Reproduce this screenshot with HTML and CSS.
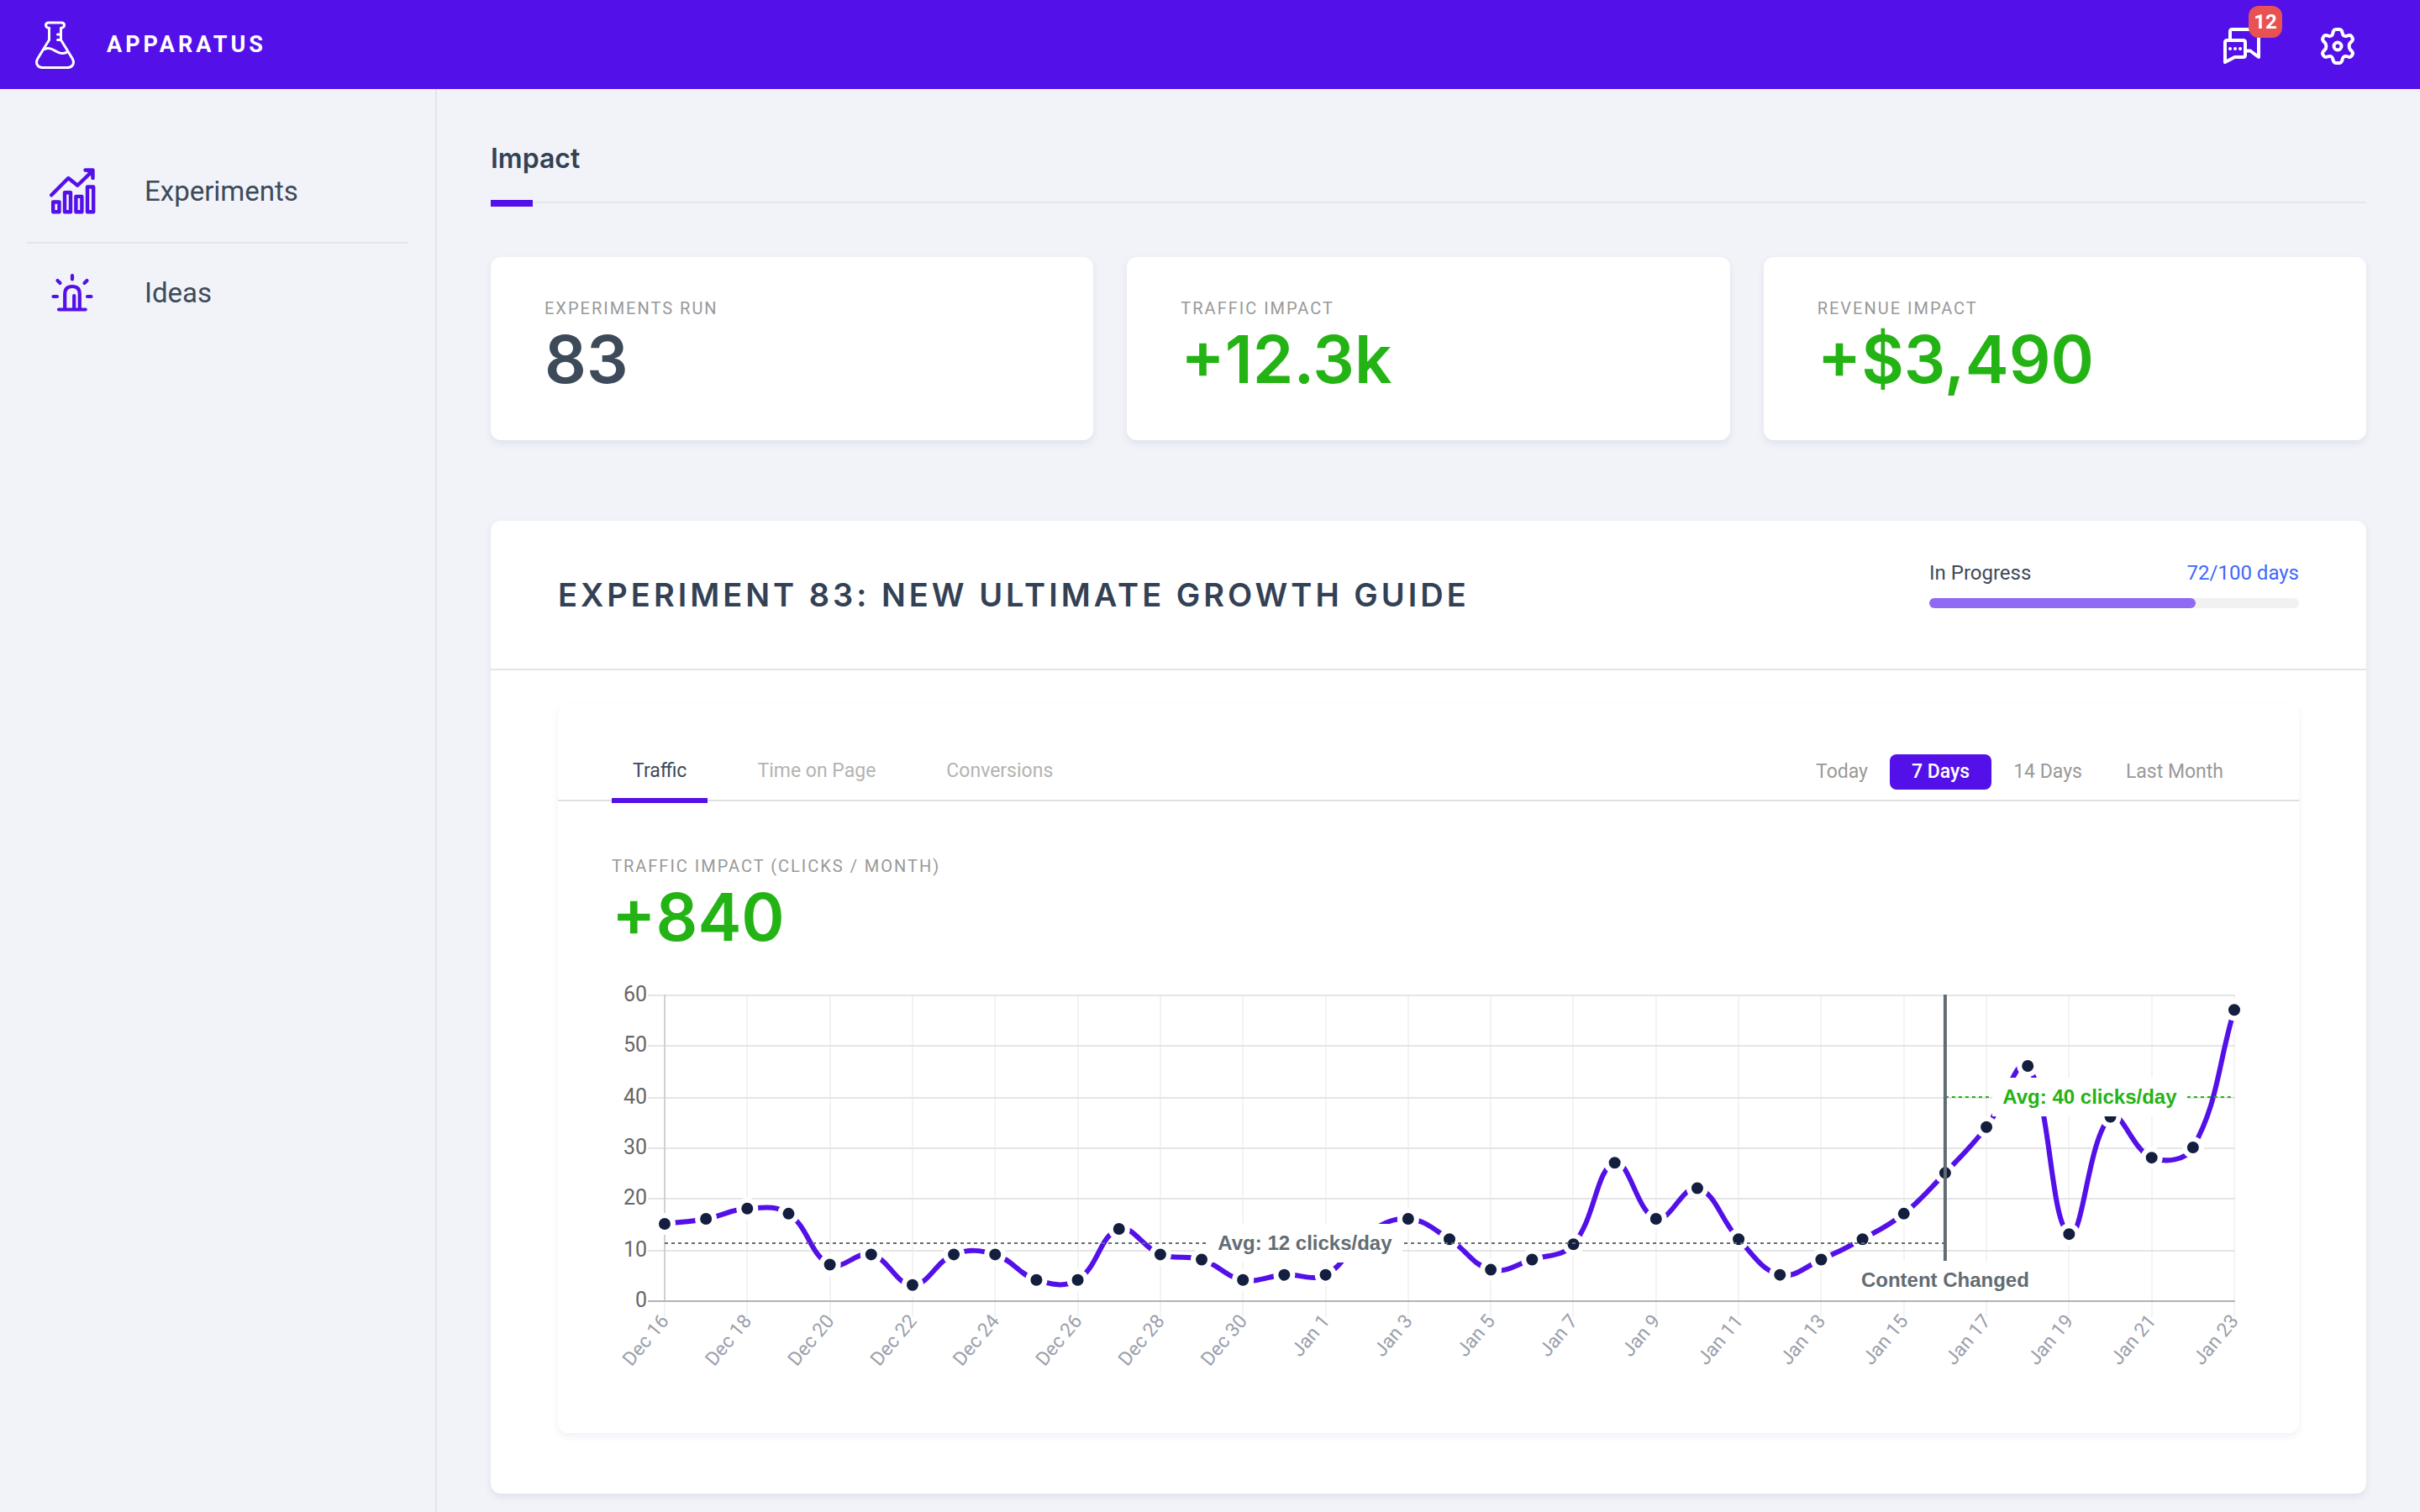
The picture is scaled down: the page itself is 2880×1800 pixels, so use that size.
FILE: index.html
```html
<!DOCTYPE html>
<html lang="en">
<head>
<meta charset="utf-8">
<meta name="viewport" content="width=device-width, initial-scale=1">
<title>Apparatus</title>
<link rel="stylesheet" href="styles.css">
</head>
<body>
<header class="topbar">
  <a class="brand" href="#">
    <svg class="brand-icon" viewBox="0 0 48 58" fill="none" stroke="#fff" stroke-width="3" stroke-linecap="round" stroke-linejoin="round" aria-hidden="true">
      <path d="M16.500 9.500C13.500 9 12.500 7.500 12.500 6Q12.500 3 16 3H31Q34.500 3 34.500 6C34.500 7.500 33.500 9 30.500 9.500"/>
      <path d="M16.500 9.500V23.500L3 45.500C-.5 51.500 3 56.500 8.500 56.500H38.500C44 56.500 47.500 51.500 44 45.500L30.500 23.500V9.500"/>
      <path d="M11 34.500C22 30 25 43 37 38.500M26.500 17H30.500M26.500 23.500H30.500"/>
    </svg>
    <span class="brand-name">APPARATUS</span>
  </a>
  <div class="actions">
    <button class="icon-button" type="button" aria-label="Messages, 12 unread">
      <svg class="icon-chat" viewBox="0 0 44 44" fill="none" stroke="#fff" stroke-width="4" stroke-linejoin="round" stroke-linecap="round" aria-hidden="true">
        <path d="M8 14V4.500Q8 2 10.500 2H39.500Q42 2 42 4.500V35L32 27.500H27"/>
        <path d="M4.500 15H23.500Q26 15 26 17.500V32.500Q26 35 23.500 35H13.500L2 41V17.500Q2 15 4.500 15Z"/>
        <g fill="#fff" stroke="none"><circle cx="8" cy="25" r="2"/><circle cx="14" cy="25" r="2"/><circle cx="20" cy="25" r="2"/></g>
      </svg>
      <span class="badge">12</span>
    </button>
    <button class="icon-button" type="button" aria-label="Settings">
      <svg class="icon-gear" viewBox="0 0 40 44" fill="none" stroke="#fff" stroke-width="4" stroke-linejoin="round" aria-hidden="true">
        <path d="M17.800 2H22.200C24.500 2 25.300 4 25.800 6.800C26.300 9.500 28.300 10.700 30.800 9.800C33.500 8.800 35.500 8.500 36.700 10.500L37.600 12.200C38.800 14.200 37.600 15.700 35.500 17.400C33 19.500 33 24.500 35.500 26.600C37.600 28.300 38.800 29.800 37.600 31.800L36.700 33.500C35.500 35.500 33.500 35.200 30.800 34.200C28.300 33.300 26.300 34.500 25.800 37.200C25.300 40 24.500 42 22.200 42H17.800C15.500 42 14.700 40 14.200 37.200C13.700 34.500 11.700 33.300 9.200 34.200C6.500 35.200 4.500 35.500 3.300 33.500L2.400 31.800C1.200 29.800 2.400 28.300 4.500 26.600C7 24.500 7 19.500 4.500 17.400C2.400 15.700 1.200 14.200 2.400 12.200L3.300 10.500C4.500 8.500 6.500 8.800 9.200 9.800C11.700 10.700 13.700 9.500 14.200 6.800C14.700 4 15.500 2 17.800 2Z"/>
        <circle cx="20" cy="22" r="4.500"/>
      </svg>
    </button>
  </div>
</header>
<div class="layout">
  <nav class="sidebar" aria-label="Main">
    <a class="nav-item" href="#">
      <svg class="nav-icon" viewBox="0 0 56 56" fill="none" stroke="#5310e8" stroke-width="4.400" stroke-linejoin="round" stroke-linecap="round" aria-hidden="true">
        <path d="M2.200 32.300L22.300 12L33.300 20.800L50 4.500M42.500 2.500H51.500V12"/>
        <path d="M44 2.500H51.500V10.500Z" fill="#5310e8" stroke-width="2"/>
        <path d="M4.200 40.500H11.500V52.200H4.200ZM18 29.300H25V52.200H18ZM31.400 33.900H38.400V52.200H31.400ZM45 22.500H52.200V52.200H45Z"/>
      </svg>
      <span>Experiments</span>
    </a>
    <a class="nav-item" href="#">
      <svg class="nav-icon" viewBox="0 0 56 56" fill="none" stroke="#5310e8" stroke-width="4.200" stroke-linejoin="round" stroke-linecap="round" aria-hidden="true">
        <path d="M11 47.500H42.700M18.200 47V29Q18.200 20 27 20Q35.800 20 35.800 29V47M29.200 31V47"/>
        <path d="M27 7V11.500M9.500 13L12.500 16M44.500 13L41.500 16M4.500 32H9M45 32H49.500"/>
      </svg>
      <span>Ideas</span>
    </a>
  </nav>
  <main class="content">
    <h1 class="page-title">Impact</h1>
    <section class="stats" aria-label="Totals">
      <div class="card stat-card">
        <p class="stat-label">EXPERIMENTS RUN</p>
        <p class="stat-value">83</p>
      </div>
      <div class="card stat-card">
        <p class="stat-label">TRAFFIC IMPACT</p>
        <p class="stat-value gain">+12.3k</p>
      </div>
      <div class="card stat-card">
        <p class="stat-label">REVENUE IMPACT</p>
        <p class="stat-value gain">+$3,490</p>
      </div>
    </section>
    <section class="card panel">
      <div class="panel-head">
        <h2 class="panel-title">EXPERIMENT 83: NEW ULTIMATE GROWTH GUIDE</h2>
        <div class="progress">
          <div class="progress-text"><span>In Progress</span><a href="#">72/100 days</a></div>
          <div class="progress-track"><div class="progress-fill" style="width: 72%"></div></div>
        </div>
      </div>
      <div class="report">
        <div class="report-bar">
          <div class="tabs" role="tablist">
            <button class="tab active" type="button" role="tab" aria-selected="true">Traffic</button>
            <button class="tab" type="button" role="tab">Time on Page</button>
            <button class="tab" type="button" role="tab">Conversions</button>
          </div>
          <div class="ranges">
            <button class="range" type="button">Today</button>
            <button class="range active" type="button">7 Days</button>
            <button class="range" type="button">14 Days</button>
            <button class="range" type="button">Last Month</button>
          </div>
        </div>
        <div class="report-body">
          <p class="stat-label">TRAFFIC IMPACT (CLICKS / MONTH)</p>
          <p class="stat-value gain">+840</p>
          <svg class="chart" id="chart" role="img" aria-label="Clicks per day, Dec 16 to Jan 23"></svg>
        </div>
      </div>
    </section>
  </main>
</div>
<script src="chart.js"></script>
</body>
</html>
```
FILE: styles.css
```css
* { box-sizing: border-box; }

body {
  margin: 0;
  min-height: 100vh;
  display: flex;
  flex-direction: column;
  background: #f2f3f8;
  color: #3d4a5a;
  font-family: Roboto, "Liberation Sans", sans-serif;
  font-size: 24px;
  line-height: 28px;
}

h1, h2, p { margin: 0; }
a { color: inherit; text-decoration: none; }
button {
  border: 0;
  background: none;
  font: inherit;
  color: inherit;
  cursor: pointer;
}

.topbar {
  display: flex;
  align-items: center;
  justify-content: space-between;
  height: 106px;
  padding: 0 78px 0 42px;
  background: #5310e8;
  color: #fff;
}
.brand { display: flex; align-items: center; gap: 37px; }
.brand-icon { width: 48px; height: 58px; }
.brand-name { font-size: 27px; font-weight: 700; letter-spacing: 4px; }
.actions { display: flex; align-items: center; gap: 72px; padding-top: 4px; }
.icon-button { position: relative; display: block; padding: 0; }
.icon-button svg { display: block; }
.icon-chat { width: 44px; height: 44px; }
.icon-gear { width: 40px; height: 44px; }
.badge {
  position: absolute;
  left: 30px;
  top: -26px;
  width: 40px;
  height: 38px;
  border-radius: 12px;
  background: #e85252;
  font-weight: 700;
  line-height: 38px;
  text-align: center;
}

.layout { display: flex; flex: 1; }
.sidebar {
  flex: none;
  width: 520px;
  padding: 62px 32px 0;
  border-right: 2px solid #e5e6eb;
}
.nav-item {
  display: flex;
  align-items: center;
  gap: 57px;
  height: 120px;
  padding-left: 27px;
  font-size: 33px;
}
.nav-item + .nav-item { border-top: 2px solid #e5e6eb; }
.nav-icon { width: 56px; height: 56px; }

.content { flex: 1; min-width: 0; padding: 63px 64px 20px; }
.page-title {
  position: relative;
  margin-bottom: 64px;
  padding-bottom: 31px;
  border-bottom: 2px solid #e5e6eb;
  color: #334155;
  font-family: Inter, Roboto, sans-serif;
  font-size: 32px;
  font-weight: 600;
  line-height: 40px;
}
.page-title::after {
  content: "";
  position: absolute;
  left: 0;
  bottom: -6px;
  width: 50px;
  height: 8px;
  background: #5310e8;
}

.card {
  border-radius: 12px;
  background: #fff;
  box-shadow: 0 4px 8px rgba(60, 80, 150, 0.1);
}
.stats {
  display: grid;
  grid-template-columns: repeat(3, 1fr);
  gap: 40px;
  margin-bottom: 96px;
}
.stat-card { padding: 49px 64px; }
.stat-label {
  margin-bottom: 2px;
  color: #999;
  font-size: 20px;
  line-height: 24px;
  letter-spacing: 2px;
}
.stat-value {
  font-family: Inter, Roboto, sans-serif;
  font-size: 78px;
  font-weight: 600;
  line-height: 94px;
}
.gain { color: #24b314; }

.panel { padding-bottom: 72px; }
.panel-head {
  display: flex;
  justify-content: space-between;
  padding: 48px 80px;
  border-bottom: 2px solid #e5e5e5;
}
.panel-title {
  color: #334155;
  font-family: Inter, Roboto, sans-serif;
  font-size: 38px;
  font-weight: 600;
  line-height: 80px;
  letter-spacing: 4px;
}
.progress { width: 440px; }
.progress-text { display: flex; justify-content: space-between; margin-bottom: 16px; }
.progress-text a { color: #3e68fb; }
.progress-track { height: 12px; border-radius: 6px; background: #f1f1f1; }
.progress-fill { height: 100%; border-radius: 6px; background: #916af3; }

.report {
  margin: 40px 80px 0;
  border-radius: 12px;
  box-shadow: 0 4px 8px rgba(60, 60, 150, 0.07);
}
.report-bar {
  display: flex;
  align-items: flex-end;
  justify-content: space-between;
  padding: 60px 64px 0;
  border-bottom: 2px solid #dde1e6;
  font-size: 23px;
}
.tabs { display: flex; gap: 34px; margin-bottom: -4px; }
.tab {
  padding: 0 25px 18px;
  border-bottom: 6px solid transparent;
  color: #b3b3b3;
}
.tab.active { border-color: #5310e8; color: #3d4a5a; }
.ranges { display: flex; margin-bottom: 12px; }
.range { padding: 7px 26px; border-radius: 8px; color: #999; }
.range.active { background: #5310e8; color: #fff; font-weight: 500; }
.report-body { padding: 65px 64px 64px; }

.chart { display: block; width: 100%; height: 482px; margin-top: 21px; }
.chart text { font-size: 24px; }
.chart .tick-y { fill: #666; font-size: 25px; text-anchor: end; }
.chart .tick-x { fill: #9a9fab; font-size: 23px; text-anchor: end; }
.note {
  font-family: "Liberation Sans", Arial, sans-serif;
  font-weight: 700;
  text-anchor: middle;
}
```
FILE: chart.js
```js
// Draws the clicks-per-day line chart at the width of its container.
const clicks = [
  15, 16, 18, 17, 7, 9, 3, 9, 9, 4, 4, 14, 9, 8, 4, 5, 5, 13, 16, 12,
  6, 8, 11, 27, 16, 22, 12, 5, 8, 12, 17, 25, 34, 46, 13, 36, 28, 30, 57
];
const CHANGED = 31;
const TENSION = 0.4;
const svg = document.getElementById('chart');

function add(tag, attrs, text) {
  const node = document.createElementNS('http://www.w3.org/2000/svg', tag);
  for (const key in attrs) node.setAttribute(key, attrs[key]);
  if (text) node.textContent = text;
  svg.appendChild(node);
}

function rule(x1, y1, x2, y2, stroke, width, dash) {
  add('line', { x1, y1, x2, y2, stroke, 'stroke-width': width || 2, 'stroke-dasharray': dash || 'none' });
}

function dayName(i) {
  return i < 16 ? 'Dec ' + (16 + i) : 'Jan ' + (i - 15);
}

function note(text, x, y, width, color) {
  add('rect', { x: x - width / 2, y: y - 23, width, height: 46, fill: '#fff' });
  add('text', { x, y: y + 8, class: 'note', fill: color }, text);
}

function draw() {
  svg.replaceChildren();
  const left = 63;
  const right = svg.clientWidth - 13;
  const top = 24;
  const bottom = 388;
  const px = i => left + (right - left) * i / (clicks.length - 1);
  const py = v => bottom - (bottom - top) * v / 60;

  for (let i = 0; i < clicks.length; i += 2) {
    const x = Math.round(px(i));
    rule(x, top, x, bottom + 20, '#f3f3f3');
  }
  for (let v = 0; v <= 60; v += 10) {
    const y = Math.round(py(v) / 2) * 2 + 1;
    rule(left - 20, y, right + 1, y, v ? '#e5e5e5' : '#b3b3b3');
    add('text', { x: left - 21, y: y + 7, class: 'tick-y' }, String(v));
  }
  rule(left, top, left, bottom, '#d0d0d0');
  for (let i = 0; i < clicks.length; i += 2) {
    add('text', { transform: `translate(${px(i)} ${bottom + 20}) rotate(-50)`, x: 0, y: 8, class: 'tick-x' }, dayName(i));
  }

  const pts = clicks.map((v, i) => ({ x: px(i), y: py(v) }));
  const ctl = pts.map((p, i) => {
    const a = pts[i - 1] || p;
    const b = pts[i + 1] || p;
    const da = Math.hypot(p.x - a.x, p.y - a.y);
    const db = Math.hypot(b.x - p.x, b.y - p.y);
    const fa = TENSION * da / (da + db);
    const fb = TENSION * db / (da + db);
    return [p.x - fa * (b.x - a.x), p.y - fa * (b.y - a.y), p.x + fb * (b.x - a.x), p.y + fb * (b.y - a.y)];
  });
  let d = `M${pts[0].x} ${pts[0].y}`;
  for (let i = 1; i < pts.length; i++) {
    d += `C${ctl[i - 1][2]} ${ctl[i - 1][3]} ${ctl[i][0]} ${ctl[i][1]} ${pts[i].x} ${pts[i].y}`;
  }
  add('path', { d, fill: 'none', stroke: '#5310e8', 'stroke-width': 6 });
  pts.forEach(p => add('circle', { cx: p.x, cy: p.y, r: 10, fill: '#141f3f', stroke: '#fff', 'stroke-width': 6 }));

  const split = px(CHANGED);
  const before = Math.round(py(11)) - 1;
  const after = Math.round(py(40)) + 1;
  rule(left, before, split, before, '#626c73', 2, '4 4');
  note('Avg: 12 clicks/day', (left + split) / 2, before, 232, '#626c73');
  rule(split, after, right, after, '#24b314', 2, '4 4');
  note('Avg: 40 clicks/day', (split + right) / 2, after, 232, '#24b314');
  rule(split, top, split, bottom - 2, '#626c73', 4);
  note('Content Changed', split, bottom - 24, 224, '#626c73');
}

draw();
window.addEventListener('resize', draw);
```
